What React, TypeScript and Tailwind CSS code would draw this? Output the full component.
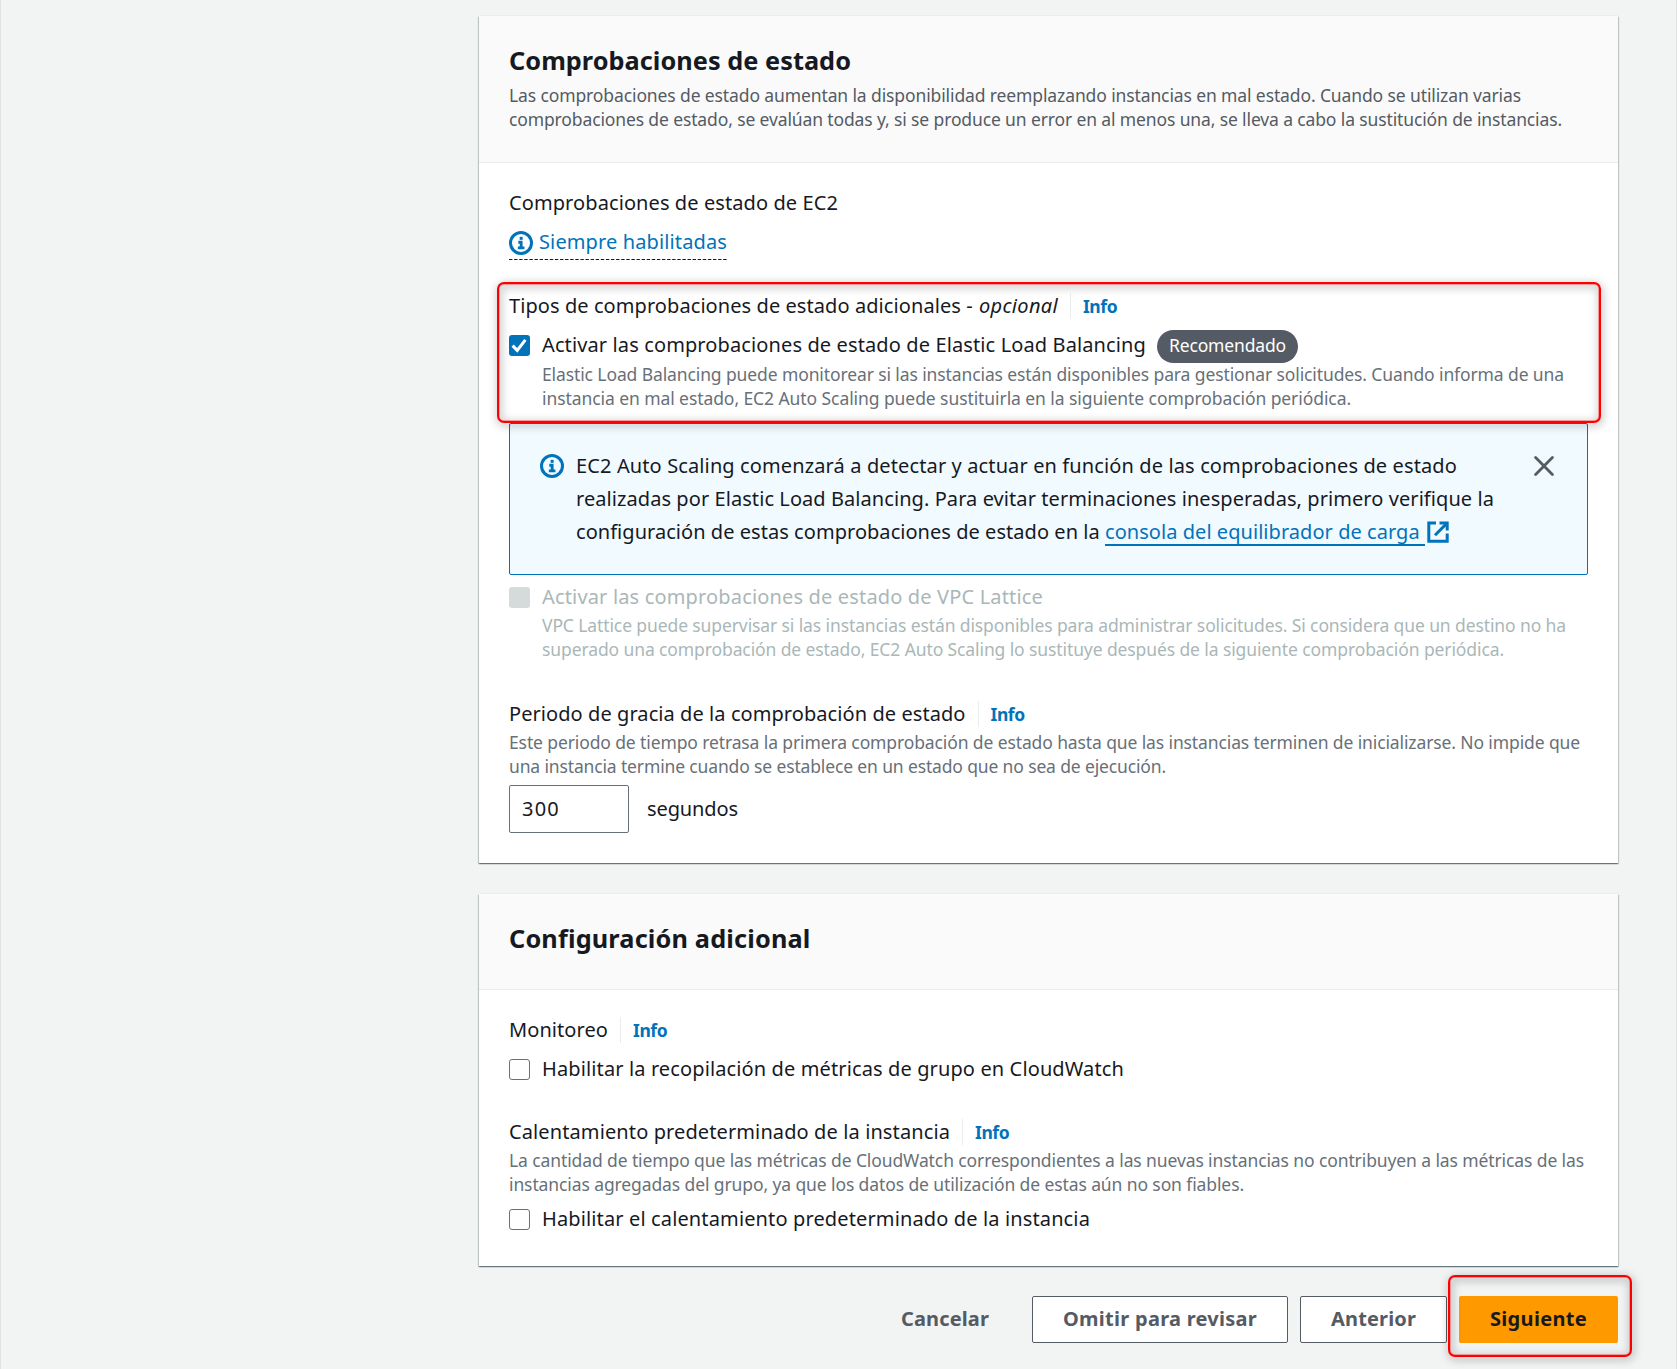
import { useLayoutEffect, useRef, type ReactNode } from "react";

/** A single line of text whose tracking is adjusted so that it spans `w` pixels. */
function Fit({ w, className = "", children }: { w: number; className?: string; children: ReactNode }) {
  const ref = useRef<HTMLSpanElement>(null);
  useLayoutEffect(() => {
    const el = ref.current!;
    el.style.letterSpacing = "0px";
    const natural = el.getBoundingClientRect().width;
    const count = el.textContent!.length;
    el.style.letterSpacing = `${(w - natural) / count}px`;
  }, [w]);
  return (
    <span ref={ref} className={`inline-block whitespace-pre ${className}`}>
      {children}
    </span>
  );
}

function InfoIcon() {
  return (
    <svg viewBox="0 0 16 16" className="h-6 w-6 shrink-0" fill="none" stroke="#0073bb">
      <circle cx="8" cy="8" r="7" strokeWidth="2" />
      <path d="M5.9 11.2h4.4M6.2 7.5h2.8M8.1 7v4.2" strokeWidth="1.9" />
      <path d="M7.1 4.9h2" strokeWidth="2" />
    </svg>
  );
}

function ExternalIcon() {
  return (
    <svg viewBox="0 0 22 22" className="h-[22px] w-[22px]" fill="none" stroke="#0073bb" strokeWidth="3">
      <path d="M9 2H1.8v18.3h18.4v-7.8" />
      <path d="M12.5 2h7.7v7.5" />
      <path d="M19.8 2.4 8 14.2" />
    </svg>
  );
}

function CloseIcon() {
  return (
    <svg viewBox="0 0 20 20" className="h-5 w-5" fill="none" stroke="#545b64" strokeWidth="2.8" strokeLinecap="round">
      <path d="M1.6 1.6 18.4 18.4M18.4 1.6 1.6 18.4" />
    </svg>
  );
}

function Checkbox({ state }: { state: "on" | "off" | "disabled" }) {
  if (state === "on")
    return (
      <span className="mt-[7px] h-[21px] w-[21px] shrink-0 rounded-[3px] bg-[#0073bb]">
        <svg viewBox="0 0 21 21" className="h-full w-full" fill="none" stroke="#fff" strokeWidth="3">
          <path d="M3.6 10.6 8.2 15.4 16.4 4.8" />
        </svg>
      </span>
    );
  if (state === "disabled") return <span className="mt-[7px] h-[21px] w-[21px] shrink-0 rounded-[3px] bg-[#d5dbdb]" />;
  return <span className="mt-[7px] h-[21px] w-[21px] shrink-0 rounded-[3px] border-[1.5px] border-[#687078] bg-white" />;
}

function InfoLink() {
  return (
    <span className="ml-3 mt-1 flex h-[26px] items-center border-l border-[#eaeded] pl-3">
      <Fit w={34.2} className="text-[17.5px] leading-6 font-bold text-[#0073bb]">Info</Fit>
    </span>
  );
}

function Lines({ lines, className }: { lines: [string, number][]; className: string }) {
  return (
    <div className={`flex flex-col items-start text-[17.5px] leading-6 ${className}`}>
      {lines.map(([text, w]) => (
        <Fit key={text} w={w}>{text}</Fit>
      ))}
    </div>
  );
}

const CARD =
  "bg-white shadow-[0_1px_1px_0_rgba(0,28,36,0.4),1px_1px_1px_0_rgba(0,28,36,0.16),-1px_1px_1px_0_rgba(0,28,36,0.16),0_-1px_0_0_#eaeded]";
const MARK =
  "pointer-events-none absolute rounded-[7px] border-2 border-[#ff0000] shadow-[inset_0_0_0_0.5px_#ff5050] drop-shadow-[1px_2px_4px_rgba(0,0,0,0.5)]";

export default function App() {
  return (
    <div className="h-[1369px] w-[1677px] overflow-hidden border-x border-[#e0e3e3] bg-[#f2f3f3] pt-4 pr-[58px] pl-[478px] font-['Noto_Sans',sans-serif] text-[20px] leading-[33px] text-[#16191f]">
      <section className={CARD}>
        <header className="border-b border-[#eaeded] bg-[#fafafa] px-[30px] pt-[26px] pb-[31px]">
          <h2 className="h-9 text-[25.3px] leading-9 font-bold"><Fit w={342}>Comprobaciones de estado</Fit></h2>
          <Lines
            className="mt-[5px] text-[#545b64]"
            lines={[
              ["Las comprobaciones de estado aumentan la disponibilidad reemplazando instancias en mal estado. Cuando se utilizan varias", 1012],
              ["comprobaciones de estado, se evalúan todas y, si se produce un error en al menos una, se lleva a cabo la sustitución de instancias.", 1053],
            ]}
          />
        </header>
        <div className="px-[30px] pt-[23px] pb-[30px]">
          <div className="flex h-[33px]"><Fit w={329}>Comprobaciones de estado de EC2</Fit></div>
          <div className="mt-1.5 flex h-[35px] w-[218px] text-[#0073bb]">
            <div className="relative flex w-full">
              <span className="mt-1.5 mr-1.5 flex h-6"><InfoIcon /></span>
              <Fit w={188}>Siempre habilitadas</Fit>
              <svg className="absolute bottom-0 left-0 h-px w-[218px]" viewBox="0 0 218 1">
                <path d="M0 .5h218" stroke="#16191f" strokeDasharray="3.4 1.7" />
              </svg>
            </div>
          </div>

          <div className="relative mt-[29px]">
            <div className="flex h-[33px]">
              <span className="flex">
                <Fit w={469}>{"Tipos de comprobaciones de estado adicionales - "}</Fit>
                <Fit w={79} className="ml-px italic">opcional</Fit>
              </span>
              <InfoLink />
            </div>
            <div className="mt-1.5 flex h-[33px]">
              <Checkbox state="on" />
              <Fit w={604} className="ml-3">Activar las comprobaciones de estado de Elastic Load Balancing</Fit>
              <span className="mt-0.5 ml-[11px] flex h-[33px] w-[141px] items-start justify-center rounded-full bg-[#545b64] pt-[3px] text-[17.5px] leading-6 text-white">
                <Fit w={117}>Recomendado</Fit>
              </span>
            </div>
            <Lines
              className="mt-px ml-[33px] text-[#687078]"
              lines={[
                ["Elastic Load Balancing puede monitorear si las instancias están disponibles para gestionar solicitudes. Cuando informa de una", 1022],
                ["instancia en mal estado, EC2 Auto Scaling puede sustituirla en la siguiente comprobación periódica.", 809],
              ]}
            />
            <div className={`${MARK} -top-[7px] -left-3 z-10 h-[141px] w-[1104px]`} />
          </div>

          <div className="mt-[13px] flex h-[152px] rounded-[2px] border border-[#0073bb] bg-[#f1faff] pt-[25px] pr-[33px] pl-[30px]">
            <span className="mt-[5px] flex h-6"><InfoIcon /></span>
            <div className="ml-3 flex flex-1 flex-col items-start">
              <Fit w={881}>EC2 Auto Scaling comenzará a detectar y actuar en función de las comprobaciones de estado</Fit>
              <Fit w={918}>realizadas por Elastic Load Balancing. Para evitar terminaciones inesperadas, primero verifique la</Fit>
              <div className="flex">
                <Fit w={529}>{"configuración de estas comprobaciones de estado en la "}</Fit>
                <span className="flex h-[31px] border-b-2 border-[#0073bb] text-[#0073bb]">
                  <Fit w={320}>{"consola del equilibrador de carga "}</Fit>
                </span>
                <span className="mt-1.5 ml-0.5"><ExternalIcon /></span>
              </div>
            </div>
            <span className="mt-[7px]"><CloseIcon /></span>
          </div>

          <div className="mt-[5px] flex h-[33px] text-[#aab7b8]">
            <Checkbox state="disabled" />
            <Fit w={501} className="ml-3">Activar las comprobaciones de estado de VPC Lattice</Fit>
          </div>
          <Lines
            className="ml-[33px] text-[#aab7b8]"
            lines={[
              ["VPC Lattice puede supervisar si las instancias están disponibles para administrar solicitudes. Si considera que un destino no ha", 1024],
              ["superado una comprobación de estado, EC2 Auto Scaling lo sustituye después de la siguiente comprobación periódica.", 962],
            ]}
          />

          <div className="mt-9 flex h-[33px]">
            <Fit w={456.5}>Periodo de gracia de la comprobación de estado</Fit>
            <InfoLink />
          </div>
          <Lines
            className="text-[#687078]"
            lines={[
              ["Este periodo de tiempo retrasa la primera comprobación de estado hasta que las instancias terminen de inicializarse. No impide que", 1071],
              ["una instancia termine cuando se establece en un estado que no sea de ejecución.", 657],
            ]}
          />
          <div className="mt-[7px] flex h-12">
            <div className="flex h-12 w-[120px] rounded-[2px] border border-[#687078] pt-1.5 pl-3">
              <Fit w={38}>300</Fit>
            </div>
            <Fit w={91} className="mt-[7px] ml-[18px]">segundos</Fit>
          </div>
        </div>
      </section>

      <section className={`${CARD} mt-[31px]`}>
        <header className="border-b border-[#eaeded] bg-[#fafafa] px-[30px] pt-[26px] pb-[33px]">
          <h2 className="h-9 text-[25.3px] leading-9 font-bold"><Fit w={301.5}>Configuración adicional</Fit></h2>
        </header>
        <div className="px-[30px] pt-[23px] pb-[31px]">
          <div className="flex h-[33px]">
            <Fit w={99}>Monitoreo</Fit>
            <InfoLink />
          </div>
          <div className="mt-1.5 flex h-[33px]">
            <Checkbox state="off" />
            <Fit w={582} className="ml-3">Habilitar la recopilación de métricas de grupo en CloudWatch</Fit>
          </div>
          <div className="mt-[30px] flex h-[33px]">
            <Fit w={441}>Calentamiento predeterminado de la instancia</Fit>
            <InfoLink />
          </div>
          <Lines
            className="text-[#687078]"
            lines={[
              ["La cantidad de tiempo que las métricas de CloudWatch correspondientes a las nuevas instancias no contribuyen a las métricas de las", 1075],
              ["instancias agregadas del grupo, ya que los datos de utilización de estas aún no son fiables.", 735],
            ]}
          />
          <div className="mt-1.5 flex h-[33px]">
            <Checkbox state="off" />
            <Fit w={548} className="ml-3">Habilitar el calentamiento predeterminado de la instancia</Fit>
          </div>
        </div>
      </section>

      <div className="mt-[30px] flex h-[47px] justify-end font-bold text-[#545b64]">
        <button className="mr-[43px] flex items-center pb-0.5"><Fit w={88}>Cancelar</Fit></button>
        <button className="mr-3 flex w-64 items-center justify-center rounded-[2px] border border-[#545b64] bg-white pb-0.5"><Fit w={194}>Omitir para revisar</Fit></button>
        <button className="mr-3 flex w-[147px] items-center justify-center rounded-[2px] border border-[#545b64] bg-white pb-0.5"><Fit w={85}>Anterior</Fit></button>
        <div className="relative flex">
          <button className="flex w-[159px] items-center justify-center rounded-[2px] bg-[#ff9900] pb-0.5 text-[#16191f]"><Fit w={97}>Siguiente</Fit></button>
          <div className={`${MARK} -top-[21px] -left-[11px] h-[82px] w-[184px]`} />
        </div>
      </div>
    </div>
  );
}
